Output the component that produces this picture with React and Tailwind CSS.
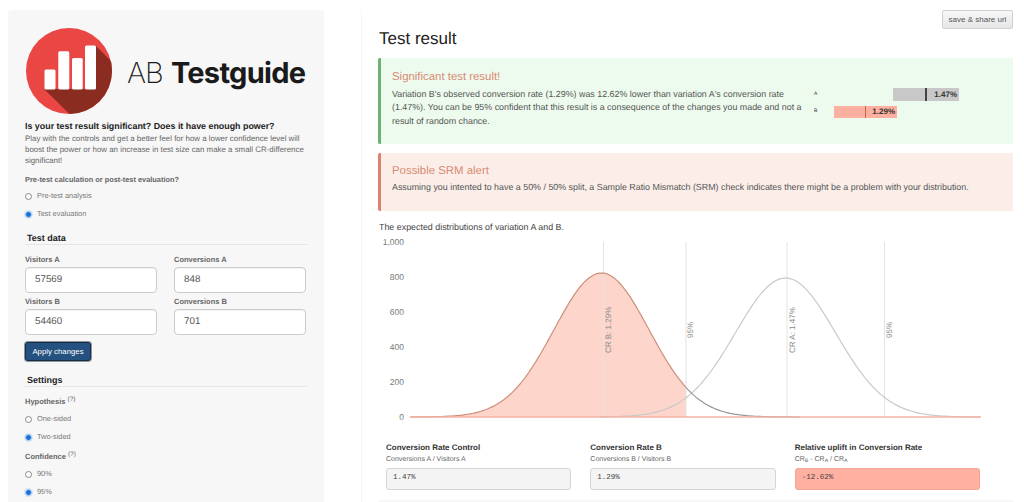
import React from 'react';

const gauss = (x, mean, sigma, peak) => 417 - peak * Math.exp(-((x - mean) ** 2) / (2 * sigma * sigma));

const curve = (from, to, mean, sigma, peak) => {
  const pts = [];
  for (let x = from; x <= to; x += 2) {
    pts.push(`${x},${gauss(x, mean, sigma, peak).toFixed(1)}`);
  }
  return pts.join(' ');
};

const Logo = () => (
  <svg width="88" height="88" viewBox="24 25 88 88" className="shrink-0">
    <defs>
      <clipPath id="logoCircle">
        <circle cx="68" cy="69" r="43" />
      </clipPath>
    </defs>
    <circle cx="68" cy="69" r="43" fill="#ea4644" />
    <polygon points="43,87 95,87 95,44 140,89 140,130 87,130" fill="#8a2c20" clipPath="url(#logoCircle)" />
    <rect x="43.5" y="67.5" width="11" height="20" rx="1.5" fill="#fff" />
    <rect x="57.3" y="49.3" width="11" height="38.2" rx="1.5" fill="#fff" />
    <rect x="71" y="56" width="10.7" height="31.5" rx="1.5" fill="#fff" />
    <rect x="84" y="43.5" width="11" height="44" rx="1.5" fill="#fff" />
  </svg>
);

const Radio = ({ label, checked }) => (
  <div className="flex items-center h-[18px] gap-[5px] text-[7.4px] text-[#777]">
    {checked ? (
      <span className="w-[7px] h-[7px] mt-[1px] rounded-full bg-[#1a6fd6] border border-[#b9d6f2] shadow-[0_0_0_1px_#d5e6f7]" />
    ) : (
      <span className="w-[7px] h-[7px] mt-[1px] rounded-full bg-white border border-[#888]" />
    )}
    <span>{label}</span>
  </div>
);

const SectionTitle = ({ children }) => (
  <div className="h-[14px] pl-[2px] text-[9px] font-bold text-[#222] leading-[14px] border-b border-[#e6e6e6]">
    {children}
  </div>
);

const Field = ({ label, value }) => (
  <div>
    <div className="h-[16px] text-[7.5px] font-bold text-[#666] leading-[18px]">{label}</div>
    <div className="h-[26px] pl-[9px] flex items-center bg-white border border-[#ccc] rounded-[4px] text-[9.8px] text-[#555] shadow-[inset_0_1px_1px_rgba(0,0,0,0.05)]">
      {value}
    </div>
  </div>
);

const Question = ({ children }) => (
  <div className="h-[17px] text-[7.5px] font-bold text-[#666] leading-[18px]">
    {children} <sup className="font-normal text-[6.5px]">(?)</sup>
  </div>
);

const Sidebar = () => (
  <aside className="w-[316px] ml-2 mt-[10px] h-[492px] shrink-0 bg-[#f7f7f7] rounded-t-[4px] pl-[17px] pr-[17px] pt-[17px] overflow-hidden">
    <div className="flex items-center">
      <Logo />
      <div className="ml-[14px] mt-[2px] text-[#1a1a1a] text-[29px] leading-none whitespace-nowrap" style={{ fontFamily: 'Inter, sans-serif' }}>
        <span className="font-extralight tracking-[-1px]">AB</span>{' '}
        <span className="font-bold tracking-[-0.7px]">Testguide</span>
      </div>
    </div>
    <h1 className="mt-[4px] text-[8.9px] leading-[14px] font-bold text-[#222] whitespace-nowrap">
      Is your test result significant? Does it have enough power?
    </h1>
    <p className="text-[7.9px] leading-[11px] text-[#666] w-[281px]">
      Play with the controls and get a better feel for how a lower confidence level will boost the power or how an increase in test size can make a small CR-difference significant!
    </p>
    <div className="mt-[7px] h-[14px] text-[7.4px] font-bold text-[#666] leading-[14px]">Pre-test calculation or post-test evaluation?</div>
    <Radio label="Pre-test analysis" />
    <Radio label="Test evaluation" checked />
    <div className="mt-[8px]">
      <SectionTitle>Test data</SectionTitle>
    </div>
    <div className="mt-[6px] grid grid-cols-2 gap-x-[17px] gap-y-0 w-[281px]">
      <Field label="Visitors A" value="57569" />
      <Field label="Conversions A" value="848" />
      <Field label="Visitors B" value="54460" />
      <Field label="Conversions B" value="701" />
    </div>
    <button className="block mt-[7px] w-[66px] h-[19px] bg-[#255180] border border-[#1c2c3e] rounded-[3px] text-white text-[7.8px] shadow-[0_0_0_1px_#8b95a0]">
      Apply changes
    </button>
    <div className="mt-[12px]">
      <SectionTitle>Settings</SectionTitle>
    </div>
    <div className="mt-[6px]">
      <Question>Hypothesis</Question>
    </div>
    <Radio label="One-sided" />
    <Radio label="Two-sided" checked />
    <div className="mt-[2px]">
      <Question>Confidence</Question>
    </div>
    <Radio label="90%" />
    <Radio label="95%" checked />
  </aside>
);

const Bars = () => (
  <div className="ml-[9px] mt-[30px] w-[150px] shrink-0 text-[8px] font-bold text-[#333]">
    <div className="flex items-center h-[13px]">
      <span className="w-[79px] text-[5px] font-normal">A</span>
      <div className="relative w-[66px] h-[13px] bg-[#c8c8c8] flex items-center justify-end pr-[2px]">
        <span className="absolute left-[32px] top-0 w-[2px] h-[13px] bg-[#444]" />
        1.47%
      </div>
    </div>
    <div className="flex items-center h-[12px] mt-[5px]">
      <span className="w-[20px] text-[5px] font-normal">B</span>
      <div className="relative w-[63px] h-[12px] bg-[#fdb0a0] flex items-center justify-end pr-[2px]">
        <span className="absolute left-[31px] top-0 w-px h-[12px] bg-[#c9664f]" />
        1.29%
      </div>
    </div>
  </div>
);

const Chart = () => (
  <svg width="634" height="190" viewBox="379 235 634 190" className="block mt-[1px]">
    {[['1,000', 245], ['800', 280], ['600', 315], ['400', 350], ['200', 385], ['0', 420]].map(([t, y]) => (
      <text key={t} x="404" y={y} textAnchor="end" fontSize="8.5" fill="#777">{t}</text>
    ))}
    <polygon points={`410,417 ${curve(410, 686, 601.5, 47.5, 144)} 686,417`} fill="#fdd5cb" />
    {[603.5, 686, 787, 884.5].map((x) => (
      <line key={x} x1={x} x2={x} y1="242" y2="417" stroke="#e3e3e3" strokeWidth="1" />
    ))}
    <polyline points={curve(600, 980, 785.5, 50, 139)} fill="none" stroke="#c9c9c9" strokeWidth="1.2" />
    <polyline points={curve(410, 686, 601.5, 47.5, 144)} fill="none" stroke="#cc8f7b" strokeWidth="1.2" />
    <polyline points={curve(686, 800, 601.5, 47.5, 144)} fill="none" stroke="#979797" strokeWidth="1.2" />
    <line x1="410" x2="981" y1="417" y2="417" stroke="#f4b3a4" strokeWidth="1.5" />
    {[['CR B: 1.29%', 611, 353], ['95%', 693, 338], ['CR A: 1.47%', 795, 353], ['95%', 892, 338]].map(([t, x, y]) => (
      <text key={t + x} x={x} y={y} transform={`rotate(-90 ${x} ${y})`} fontSize="8" fill="#888">{t}</text>
    ))}
  </svg>
);

const Stat = ({ title, sub, value, danger }) => (
  <div>
    <div className="text-[8px] font-bold text-[#333] leading-[12px] whitespace-nowrap">{title}</div>
    <div className="text-[7px] text-[#666] leading-[12px] whitespace-nowrap">{sub}</div>
    <div
      className={`mt-[2px] h-[22px] pl-[6px] flex items-center rounded-[3px] border text-[7.5px] text-[#444] ${
        danger ? 'bg-[#ffb0a0] border-[#f2a596]' : 'bg-[#f4f4f4] border-[#d5d5d5]'
      }`}
      style={{ fontFamily: '"Liberation Mono", monospace' }}
    >
      {value}
    </div>
  </div>
);

export default function App() {
  return (
    <div className="w-[1024px] h-[502px] overflow-hidden bg-white flex [text-rendering:geometricPrecision]" style={{ fontFamily: '"Liberation Sans", Arial, sans-serif' }}>
      <Sidebar />
      <main className="ml-[37px] mt-[10px] w-[652px] border-l border-[#f6f6f6] pl-[17px]">
        <div className="flex justify-end">
          <button className="w-[71px] h-[19px] bg-gradient-to-b from-[#f8f8f8] to-[#e6e6e6] border border-[#d0d0d0] rounded-[2px] text-[8px] text-[#555]">
            save &amp; share url
          </button>
        </div>
        <h2 className="-mt-[1px] text-[17px] leading-[21px] text-[#222]">Test result</h2>
        <section className="mt-[9px] h-[86px] -ml-[1px] flex bg-[#edfbee] border-l-[3px] border-[#6cb273] pl-[11px] rounded-l-[2px]">
          <div className="w-[413px] shrink-0">
            <div className="mt-[11px] text-[11.4px] leading-[16px] text-[#d98a73]">Significant test result!</div>
            <p className="mt-[3px] text-[8.9px] leading-[13.3px] text-[#555]">
              Variation B's observed conversion rate (1.29%) was 12.62% lower than variation A's conversion rate (1.47%). You can be 95% confident that this result is a consequence of the changes you made and not a result of random chance.
            </p>
          </div>
          <Bars />
        </section>
        <section className="mt-[9px] h-[58px] -ml-[1px] bg-[#fbeee9] border-l-[3px] border-[#e0806e] pl-[11px] rounded-l-[2px]">
          <div className="pt-[10px] text-[11.4px] leading-[16px] text-[#d98a73]">Possible SRM alert</div>
          <p className="mt-[2px] text-[8.9px] leading-[13.3px] text-[#555] whitespace-nowrap">
            Assuming you intented to have a 50% / 50% split, a Sample Ratio Mismatch (SRM) check indicates there might be a problem with your distribution.
          </p>
        </section>
        <p className="mt-[10px] text-[8.9px] leading-[13px] text-[#444]">The expected distributions of variation A and B.</p>
        <Chart />
        <div className="mt-[17px] ml-[7px] grid grid-cols-3 gap-x-[19px] w-[594px]">
          <Stat title="Conversion Rate Control" sub="Conversions A / Visitors A" value="1.47%" />
          <Stat title="Conversion Rate B" sub="Conversions B / Visitors B" value="1.29%" />
          <Stat
            title="Relative uplift in Conversion Rate"
            sub={<>CR<sub>B</sub> - CR<sub>A</sub> / CR<sub>A</sub></>}
            value="-12.62%"
            danger
          />
        </div>
        <div className="mt-[10px] h-[4px] bg-[#f7f7f7]" />
      </main>
    </div>
  );
}
